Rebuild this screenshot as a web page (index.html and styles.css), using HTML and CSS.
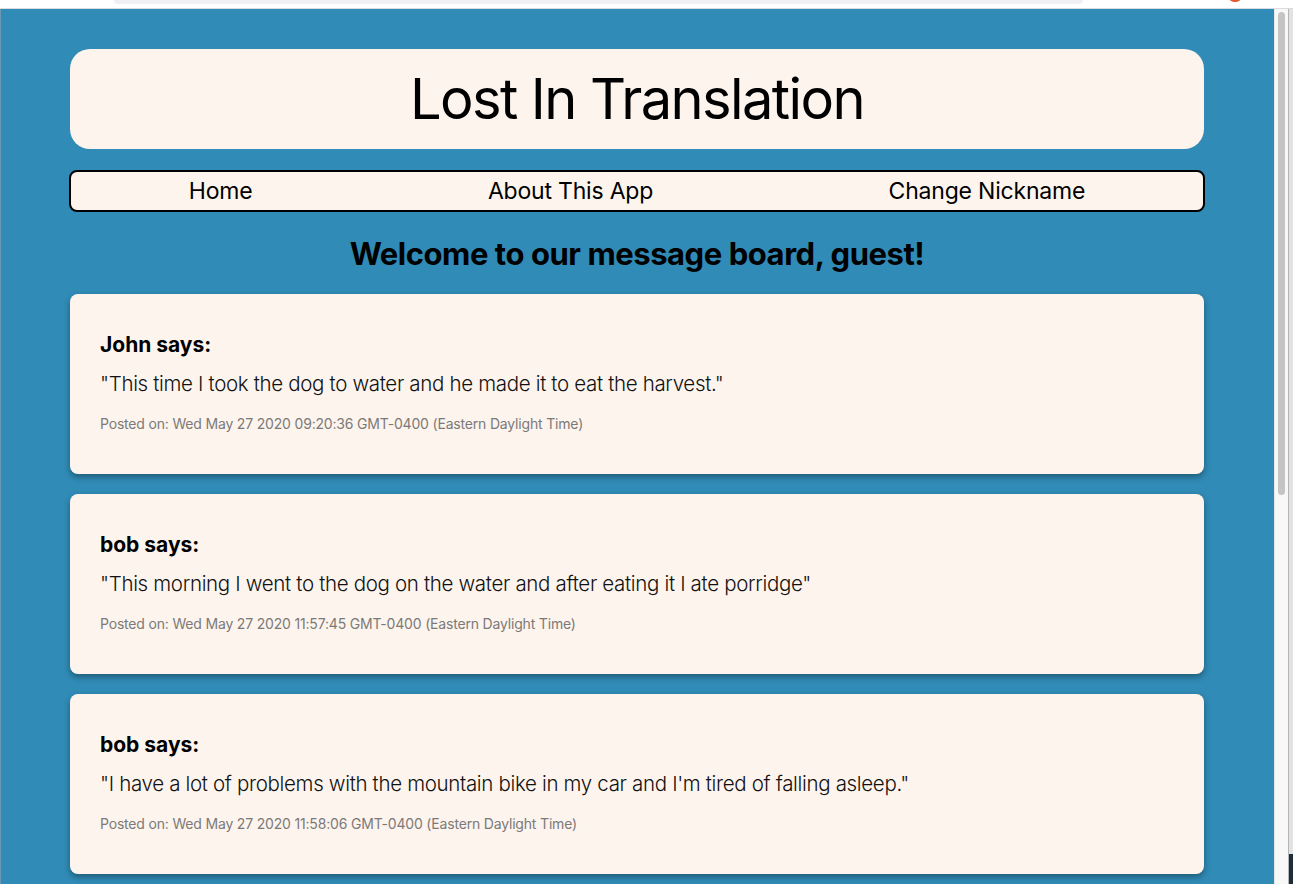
FILE: index.html
```html
<!DOCTYPE html>
<html lang="en">
<head>
<meta charset="utf-8">
<title>Lost In Translation</title>
<link rel="stylesheet" href="styles.css">
</head>
<body>
<div class="chrome"><div class="chrome-bar"></div><div class="chrome-dot"></div></div>
<div class="window">
  <main class="viewport">
    <header class="title-box"><h1>Lost In Translation</h1></header>
    <nav class="nav">
      <a class="nav-link">Home</a>
      <a class="nav-link">About This App</a>
      <a class="nav-link">Change Nickname</a>
    </nav>
    <h2 class="welcome">Welcome to our message board, guest!</h2>
    <section class="posts">
      <article class="post">
        <h3 class="author">John says:</h3>
        <p class="message">"This time I took the dog to water and he made it to eat the harvest."</p>
        <p class="date">Posted on: Wed May 27 2020 09:20:36 GMT-0400 (Eastern Daylight Time)</p>
      </article>
      <article class="post">
        <h3 class="author">bob says:</h3>
        <p class="message">"This morning I went to the dog on the water and after eating it I ate porridge"</p>
        <p class="date">Posted on: Wed May 27 2020 11:57:45 GMT-0400 (Eastern Daylight Time)</p>
      </article>
      <article class="post">
        <h3 class="author">bob says:</h3>
        <p class="message">"I have a lot of problems with the mountain bike in my car and I'm tired of falling asleep."</p>
        <p class="date">Posted on: Wed May 27 2020 11:58:06 GMT-0400 (Eastern Daylight Time)</p>
      </article>
    </section>
  </main>
  <div class="scrollbar"><div class="thumb"></div></div>
  <div class="side-edge"><div class="side-dark"></div></div>
</div>
</body>
</html>
```
FILE: styles.css
```css
html, body {
  margin: 0;
  padding: 0;
  height: 100%;
  overflow: hidden;
  font-family: Inter, "Noto Sans", sans-serif;
  background: #ffffff;
}
.chrome {
  height: 9px;
  background: #ffffff;
  position: relative;
  border-bottom: 1px solid #d9dde2;
  box-sizing: border-box;
}
.chrome-bar {
  position: absolute;
  left: 114px;
  right: 210px;
  top: 0;
  height: 4px;
  background: #eef0f3;
  border-radius: 0 0 6px 6px;
}
.chrome-dot {
  position: absolute;
  right: 52px;
  top: -6px;
  width: 12px;
  height: 8px;
  border-radius: 50%;
  background: #e8532f;
}
.window {
  display: flex;
  height: 875px;
}
.viewport {
  flex: 1;
  background: #308bb6;
  padding: 40px 70px 0 69px;
  overflow: hidden;
  border-left: 1px solid #6b98b0;
}
.title-box {
  background: #fdf4ee;
  height: 100px;
  border-radius: 20px;
  display: flex;
  align-items: center;
  justify-content: center;
}
.title-box h1 {
  margin: 0;
  font-weight: 400;
  font-size: 56px;
  letter-spacing: -1.6px;
  color: #000;
  line-height: 1;
}
.nav {
  margin: 21px -1px 0;
  height: 42px;
  box-sizing: border-box;
  border: 2px solid #000;
  border-radius: 8px;
  background: #fdf4ee;
  display: flex;
  justify-content: space-around;
  align-items: center;
}
.nav-link {
  font-size: 23px;
  color: #000;
  text-decoration: none;
  letter-spacing: -0.2px;
}
.welcome {
  margin: 22px 0 20px;
  text-align: center;
  font-size: 31px;
  font-weight: 700;
  line-height: 40px;
  letter-spacing: -0.45px;
  color: #000;
}
.posts {
  display: flex;
  flex-direction: column;
  gap: 20px;
}
.post {
  background: #fdf4ee;
  border-radius: 8px;
  height: 180px;
  box-sizing: border-box;
  padding: 38px 30px 0;
  box-shadow: 0 3px 6px rgba(0, 0, 0, 0.35);
}
.author {
  margin: 0;
  font-size: 21px;
  line-height: 26px;
  font-weight: 700;
  color: #000;
}
.message {
  margin: 12px 0 0;
  font-size: 20.5px;
  line-height: 28px;
  font-weight: 300;
  color: #111;
  letter-spacing: -0.33px;
}
.date {
  margin: 17px 0 0;
  font-size: 14px;
  line-height: 18px;
  color: #7c7a78;
  letter-spacing: -0.18px;
}
.scrollbar {
  width: 13px;
  background: #f8f8f8;
  border-left: 1px solid #e6e6e6;
  position: relative;
}
.thumb {
  position: absolute;
  left: 3px;
  top: 3px;
  width: 7px;
  height: 483px;
  border-radius: 4px;
  background: #c4c4c4;
}
.side-edge {
  width: 4px;
  background: #e2e2e2;
  border-left: 1px solid #b5b5b5;
  display: flex;
  flex-direction: column;
  justify-content: flex-end;
}
.side-dark {
  height: 30px;
  background: #1d2b3a;
}
```
